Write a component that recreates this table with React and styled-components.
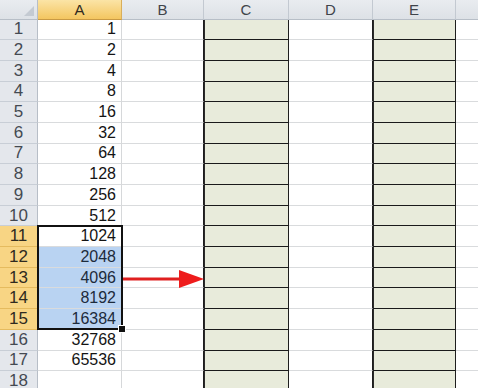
import React from 'react';
import styled, { createGlobalStyle, css } from 'styled-components';

const GlobalStyle = createGlobalStyle`
  html, body { margin: 0; padding: 0; background: #fff; overflow: hidden; }
  body { font-family: "Liberation Sans", Arial, sans-serif; }
`;

const COLS = ['A', 'B', 'C', 'D', 'E', 'F'];
const GREEN = ['C', 'E'];
const values = [1, 2, 4, 8, 16, 32, 64, 128, 256, 512, 1024, 2048, 4096, 8192, 16384, 32768, 65536, ''];

const Sheet = styled.div`
  display: grid;
  grid-template-columns: 38px 84px 82px 85px 84px 83px 83px;
  grid-template-rows: 19.5px repeat(18, 20.7px);
  width: 478px;
  height: 388px;
  overflow: hidden;
`;

const placed = css`
  grid-row: ${(p) => p.$row + 1};
  grid-column: ${(p) => p.$col + 1};
`;

const Corner = styled.div`
  ${placed}
  position: relative;
  background: linear-gradient(#e9ecf0, #dde1e6);
  border-right: 1px solid #b7bec7;
  border-bottom: 1px solid #b7bec7;
  &::after {
    content: '';
    position: absolute;
    right: 3px;
    bottom: 3px;
    border-left: 10px solid transparent;
    border-bottom: 10px solid #c4cad2;
  }
`;

const ColHead = styled.div`
  ${placed}
  display: flex;
  align-items: center;
  justify-content: center;
  font-size: 15px;
  color: #3f444b;
  background: linear-gradient(#e9ecf0, #dde1e6);
  border-right: 1px solid #c3c9d1;
  border-bottom: 1px solid #b7bec7;
  ${(p) => p.$active && css`
    background: linear-gradient(#fbe4a6, #f4c660);
    border-right-color: #d9ae5a;
    border-bottom-color: #c99a44;
    color: #2f2a20;
  `}
`;

const RowHead = styled.div`
  ${placed}
  display: flex;
  align-items: center;
  justify-content: center;
  font-size: 17px;
  color: #444a52;
  background: #e4e7ec;
  border-right: 1px solid #b7bec7;
  border-bottom: 1px solid #c8ced6;
  ${(p) => p.$active && css`
    background: #f8d584;
    border-bottom-color: #e5bb5f;
    border-right-color: #d9ae5a;
    color: #2f2a20;
  `}
`;

const Cell = styled.div`
  ${placed}
  display: flex;
  align-items: center;
  justify-content: flex-end;
  padding-right: 5px;
  font-size: 16px;
  color: #141414;
  background: #fff;
  border-right: 1px solid ${(p) => (p.$darkRight ? '#1e1e1e' : '#d6d8da')};
  border-bottom: 1px solid #d9dbdd;
  ${(p) => p.$green && css`
    background: #e8ebdb;
    border-bottom-color: #1a1a1a;
    box-shadow: inset 1px 0 0 #2a2a2a;
  `}
  ${(p) => p.$selected && css`
    background: #b9d3f2;
    color: #1d2b3c;
  `}
`;

const Selection = styled.div`
  position: relative;
  grid-column: 2;
  grid-row: 12 / 17;
  margin: -1px -1px 0 -1px;
  border: 2px solid #111;
  pointer-events: none;
  &::after {
    content: '';
    position: absolute;
    right: -5px;
    bottom: -5px;
    width: 6px;
    height: 6px;
    background: #111;
    border: 1px solid #fff;
  }
`;

const ArrowBox = styled.div`
  grid-column: 3;
  grid-row: 14;
  display: flex;
  align-items: center;
  pointer-events: none;
`;

function Arrow() {
  return (
    <svg width="82" height="21" viewBox="0 0 82 21" style={{ display: 'block' }}>
      <rect x="1" y="9.5" width="58" height="3" fill="#e02020" />
      <polygon points="57,2 82,11 57,20" fill="#ee1c1c" />
    </svg>
  );
}

export default function App() {
  return (
    <>
      <GlobalStyle />
      <Sheet>
        <Corner $row={0} $col={0} />
        {COLS.map((c, ci) => (
          <ColHead key={c} $row={0} $col={ci + 1} $active={c === 'A'}>{c}</ColHead>
        ))}
        {values.map((v, i) => {
          const row = i + 1;
          return (
            <React.Fragment key={row}>
              <RowHead $row={row} $col={0} $active={row >= 11 && row <= 15}>{row}</RowHead>
              {COLS.map((c, ci) => {
                const next = COLS[ci + 1];
                const green = GREEN.includes(c);
                return (
                  <Cell
                    key={c}
                    $row={row}
                    $col={ci + 1}
                    $green={green}
                    $darkRight={green || GREEN.includes(next)}
                    $selected={c === 'A' && row >= 12 && row <= 15}
                  >
                    {c === 'A' ? v : ''}
                  </Cell>
                );
              })}
            </React.Fragment>
          );
        })}
        <Selection />
        <ArrowBox>
          <Arrow />
        </ArrowBox>
      </Sheet>
    </>
  );
}
